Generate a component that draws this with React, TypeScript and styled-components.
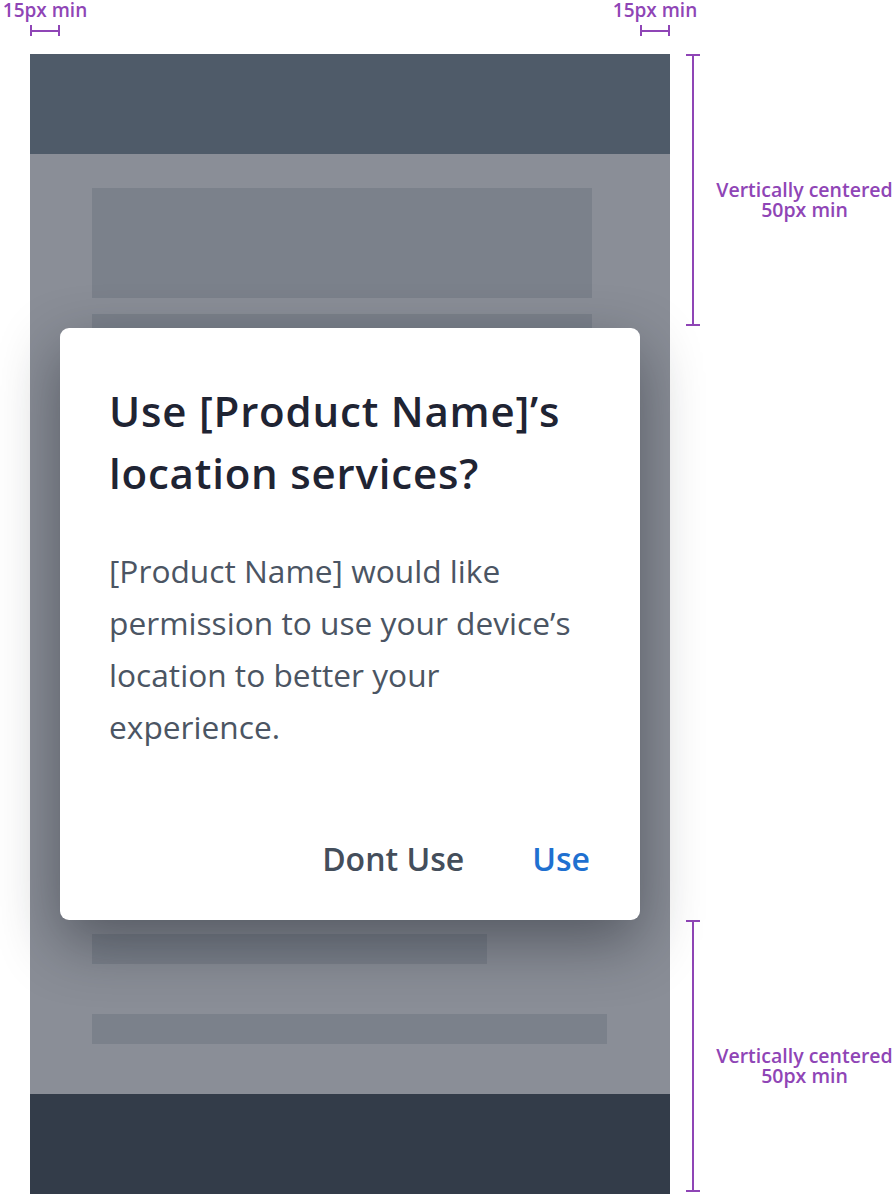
import styled, { createGlobalStyle } from "styled-components";

const GlobalStyle = createGlobalStyle`
  html, body {
    margin: 0;
    padding: 0;
    background: #ffffff;
  }
  body {
    font-family: "Open Sans", "Noto Sans", sans-serif;
  }
`;

const ACCENT = "#8f45b6";

const Page = styled.div`
  width: 894px;
  height: 1194px;
  overflow: hidden;
`;

const TopRuler = styled.div`
  width: 700px;
  height: 54px;
  display: flex;
  justify-content: space-between;
`;

const WidthMark = styled.div`
  width: 90px;
  display: flex;
  flex-direction: column;
  align-items: center;
`;

const MarkLabel = styled.span`
  color: ${ACCENT};
  font-size: 19px;
  font-weight: 600;
  line-height: 20px;
  white-space: nowrap;
`;

const HBracket = styled.div`
  margin-top: 5px;
  width: 30px;
  height: 11px;
  box-sizing: border-box;
  border-left: 2px solid ${ACCENT};
  border-right: 2px solid ${ACCENT};
  display: flex;
  align-items: center;
  &::after {
    content: "";
    flex: 1;
    height: 2px;
    background: ${ACCENT};
  }
`;

const Main = styled.div`
  display: flex;
  height: 1140px;
`;

const Frame = styled.div`
  position: relative;
  margin-left: 30px;
  width: 640px;
  display: flex;
  flex-direction: column;
`;

const Header = styled.div`
  height: 100px;
  background: #4f5b69;
`;

const Content = styled.div`
  flex: 1;
  background: #8a8e97;
  padding: 0 62px;
  display: flex;
  flex-direction: column;
`;

const Block = styled.div<{ $w: number; $h: number; $top: number }>`
  width: ${(p) => p.$w}px;
  height: ${(p) => p.$h}px;
  margin-top: ${(p) => p.$top}px;
  background: #7b818b;
`;

const Footer = styled.div`
  height: 100px;
  background: #333c49;
`;

const Overlay = styled.div`
  position: absolute;
  inset: 0;
  display: flex;
  align-items: center;
  padding: 0 30px;
`;

const Dialog = styled.div`
  flex: 1;
  background: #ffffff;
  border-radius: 9px;
  padding: 52px 50px 41px 49px;
  box-shadow: 0 22px 60px rgba(20, 24, 34, 0.45);
`;

const Title = styled.h2`
  margin: 0;
  font-size: 42px;
  letter-spacing: 0.8px;
  line-height: 62px;
  font-weight: 600;
  color: #1f2433;
`;

const Message = styled.p`
  margin: 41px 0 0;
  font-size: 31.7px;
  line-height: 52px;
  font-weight: 400;
  color: #4b5563;
`;

const Actions = styled.div`
  margin-top: 86px;
  display: flex;
  justify-content: flex-end;
  gap: 68px;
`;

const ActionButton = styled.button<{ $primary?: boolean }>`
  border: none;
  background: none;
  padding: 0;
  font-family: inherit;
  font-size: 32px;
  line-height: 40px;
  font-weight: 600;
  color: ${(p) => (p.$primary ? "#1f70d0" : "#444e5b")};
  cursor: pointer;
`;

const SideRuler = styled.div`
  flex: 1;
  display: flex;
  flex-direction: column;
  justify-content: space-between;
  padding-bottom: 2px;
`;

const HeightMark = styled.div`
  height: 272px;
  display: flex;
  align-items: center;
`;

const VBracket = styled.div`
  margin-left: 16px;
  width: 14px;
  height: 100%;
  box-sizing: border-box;
  border-top: 2px solid ${ACCENT};
  border-bottom: 2px solid ${ACCENT};
  display: flex;
  justify-content: center;
  &::after {
    content: "";
    width: 2px;
    background: ${ACCENT};
  }
`;

const SideLabel = styled.div`
  margin: 20px 0 0 15px;
  width: 179px;
  text-align: center;
  color: ${ACCENT};
  font-size: 19.5px;
  font-weight: 600;
  line-height: 20px;
  white-space: nowrap;
`;

export default function App() {
  return (
    <Page>
      <GlobalStyle />
      <TopRuler>
        <WidthMark>
          <MarkLabel>15px min</MarkLabel>
          <HBracket />
        </WidthMark>
        <WidthMark>
          <MarkLabel>15px min</MarkLabel>
          <HBracket />
        </WidthMark>
      </TopRuler>
      <Main>
        <Frame>
          <Header />
          <Content>
            <Block $w={500} $h={110} $top={34} />
            <Block $w={500} $h={30} $top={16} />
            <Block $w={395} $h={30} $top={590} />
            <Block $w={515} $h={30} $top={50} />
          </Content>
          <Footer />
          <Overlay>
            <Dialog>
              <Title>
                Use [Product Name]’s
                <br />
                location services?
              </Title>
              <Message>
                [Product Name] would like
                <br />
                permission to use your device’s
                <br />
                location to better your
                <br />
                experience.
              </Message>
              <Actions>
                <ActionButton>Dont Use</ActionButton>
                <ActionButton $primary>Use</ActionButton>
              </Actions>
            </Dialog>
          </Overlay>
        </Frame>
        <SideRuler>
          <HeightMark>
            <VBracket />
            <SideLabel>
              Vertically centered
              <br />
              50px min
            </SideLabel>
          </HeightMark>
          <HeightMark>
            <VBracket />
            <SideLabel>
              Vertically centered
              <br />
              50px min
            </SideLabel>
          </HeightMark>
        </SideRuler>
      </Main>
    </Page>
  );
}
